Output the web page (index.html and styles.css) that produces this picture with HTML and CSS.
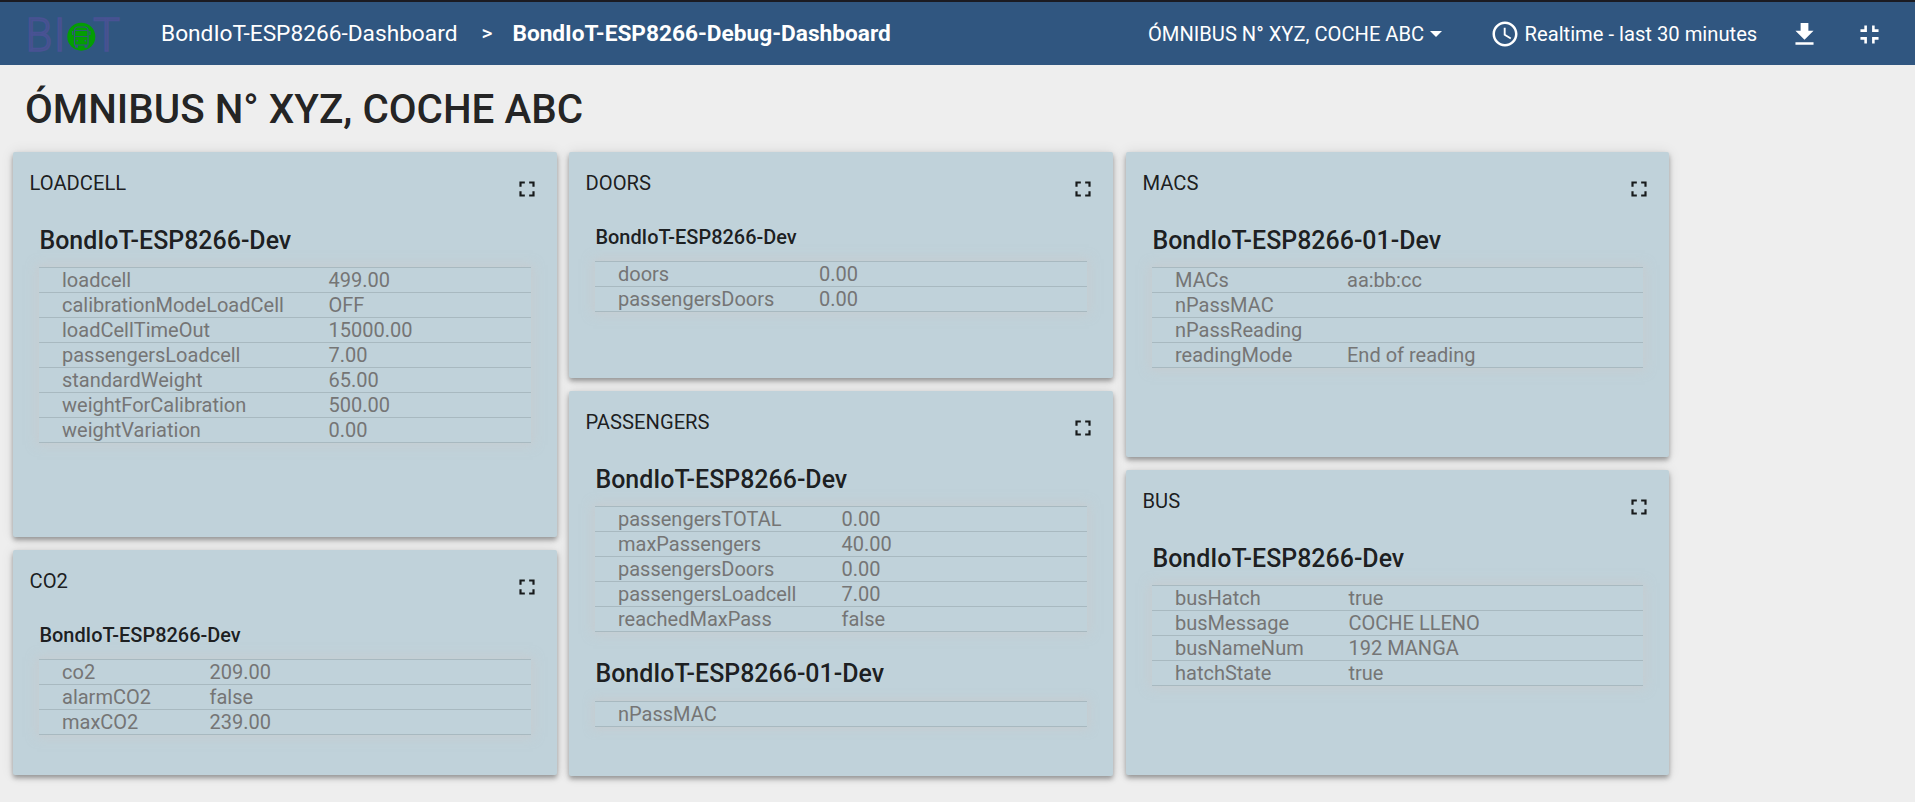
FILE: index.html
```html
<!DOCTYPE html>
<html lang="es">
<head>
<meta charset="utf-8">
<title>BondIoT-ESP8266-Debug-Dashboard</title>
<link rel="stylesheet" href="styles.css">
</head>
<body>
<svg class="defs" width="0" height="0">
  <symbol id="fullscreen" viewBox="0 0 24 24"><path d="M7 14H5v5h5v-2H7v-3zm-2-4h2V7h3V5H5v5zm12 7h-3v2h5v-5h-2v3zM14 5v2h3v3h2V5h-5z"/></symbol>
</svg>
<header class="toolbar">
  <svg class="logo" width="100" height="56" viewBox="0 -5 100 56">
    <g class="logo-letters">
      <text x="1.5" y="39.5" textLength="27" lengthAdjust="spacingAndGlyphs">B</text>
      <text x="29.5" y="39.5">I</text>
      <text x="69" y="39.5" textLength="27" lengthAdjust="spacingAndGlyphs">T</text>
    </g>
    <circle cx="57.3" cy="25.700" r="14" fill="#039d03"/>
    <path d="M50.500 34V19q.3-2.500 3-3h7.500q2.700.5 3 3v15z" fill="none" stroke="#30567f" stroke-width="1.2"/>
    <path d="M50.500 19.500h13.500M50.500 25.500h13.500" stroke="#30567f" stroke-width=".9"/>
    <path d="M48 20h1.200v4h-1.200zM65.300 20h1.200v4h-1.200zM51 34h3v2.800h-3zM60.500 34h3v2.800h-3z" fill="#30567f"/>
    <circle cx="53.300" cy="29.700" r=".9" fill="#30567f"/><circle cx="61.300" cy="29.700" r=".9" fill="#30567f"/>
  </svg>
  <nav class="crumbs">
    <span class="crumb">BondIoT-ESP8266-Dashboard</span>
    <span class="sep">&gt;</span>
    <span class="crumb current">BondIoT-ESP8266-Debug-Dashboard</span>
  </nav>
  <div class="entity"><span>ÓMNIBUS N° XYZ, COCHE ABC</span><i class="caret"></i></div>
  <div class="time">
    <svg width="30" height="30" viewBox="0 0 24 24" fill="#fff"><path d="M11.990 2C6.470 2 2 6.480 2 12s4.470 10 9.990 10C17.520 22 22 17.520 22 12S17.520 2 11.990 2zM12 20c-4.420 0-8-3.580-8-8s3.580-8 8-8 8 3.580 8 8-3.580 8-8 8zm.5-13H11v6l5.250 3.150.75-1.230-4.500-2.670z"/></svg>
    <span>Realtime - last 30 minutes</span>
  </div>
  <svg class="download" width="31" height="31" viewBox="0 0 24 24" fill="#fff"><path d="M19 9h-4V3H9v6H5l7 7 7-7zM5 18v2h14v-2H5z"/></svg>
  <svg class="exit" width="31" height="31" viewBox="0 0 24 24" fill="#fff"><path d="M5 16h3v3h2v-5H5v2zm3-8H5v2h5V5H8v3zm6 11h2v-3h3v-2h-5v5zm2-11V5h-2v5h5V8h-3z"/></svg>
</header>
<h1 class="title">ÓMNIBUS N° XYZ, COCHE ABC</h1>
<main class="board">
  <div class="column">
    <section class="card loadcell">
      <div class="head"><span>LOADCELL</span><svg class="full"><use href="#fullscreen"/></svg></div>
      <h2 class="device">BondIoT-ESP8266-Dev</h2>
      <dl class="rows">
        <div class="row"><dt>loadcell</dt><dd>499.00</dd></div>
        <div class="row"><dt>calibrationModeLoadCell</dt><dd>OFF</dd></div>
        <div class="row"><dt>loadCellTimeOut</dt><dd>15000.00</dd></div>
        <div class="row"><dt>passengersLoadcell</dt><dd>7.00</dd></div>
        <div class="row"><dt>standardWeight</dt><dd>65.00</dd></div>
        <div class="row"><dt>weightForCalibration</dt><dd>500.00</dd></div>
        <div class="row"><dt>weightVariation</dt><dd>0.00</dd></div>
      </dl>
    </section>
    <section class="card co2">
      <div class="head"><span>CO2</span><svg class="full"><use href="#fullscreen"/></svg></div>
      <h2 class="device small">BondIoT-ESP8266-Dev</h2>
      <dl class="rows">
        <div class="row"><dt>co2</dt><dd>209.00</dd></div>
        <div class="row"><dt>alarmCO2</dt><dd>false</dd></div>
        <div class="row"><dt>maxCO2</dt><dd>239.00</dd></div>
      </dl>
    </section>
  </div>
  <div class="column middle">
    <section class="card doors">
      <div class="head"><span>DOORS</span><svg class="full"><use href="#fullscreen"/></svg></div>
      <h2 class="device small">BondIoT-ESP8266-Dev</h2>
      <dl class="rows">
        <div class="row"><dt>doors</dt><dd>0.00</dd></div>
        <div class="row"><dt>passengersDoors</dt><dd>0.00</dd></div>
      </dl>
    </section>
    <section class="card passengers">
      <div class="head"><span>PASSENGERS</span><svg class="full"><use href="#fullscreen"/></svg></div>
      <h2 class="device">BondIoT-ESP8266-Dev</h2>
      <dl class="rows">
        <div class="row"><dt>passengersTOTAL</dt><dd>0.00</dd></div>
        <div class="row"><dt>maxPassengers</dt><dd>40.00</dd></div>
        <div class="row"><dt>passengersDoors</dt><dd>0.00</dd></div>
        <div class="row"><dt>passengersLoadcell</dt><dd>7.00</dd></div>
        <div class="row"><dt>reachedMaxPass</dt><dd>false</dd></div>
      </dl>
      <h2 class="device second">BondIoT-ESP8266-01-Dev</h2>
      <dl class="rows">
        <div class="row"><dt>nPassMAC</dt><dd></dd></div>
      </dl>
    </section>
  </div>
  <div class="column">
    <section class="card macs">
      <div class="head"><span>MACS</span><svg class="full"><use href="#fullscreen"/></svg></div>
      <h2 class="device">BondIoT-ESP8266-01-Dev</h2>
      <dl class="rows">
        <div class="row"><dt>MACs</dt><dd>aa:bb:cc</dd></div>
        <div class="row"><dt>nPassMAC</dt><dd></dd></div>
        <div class="row"><dt>nPassReading</dt><dd></dd></div>
        <div class="row"><dt>readingMode</dt><dd>End of reading</dd></div>
      </dl>
    </section>
    <section class="card bus">
      <div class="head"><span>BUS</span><svg class="full"><use href="#fullscreen"/></svg></div>
      <h2 class="device">BondIoT-ESP8266-Dev</h2>
      <dl class="rows">
        <div class="row"><dt>busHatch</dt><dd>true</dd></div>
        <div class="row"><dt>busMessage</dt><dd>COCHE LLENO</dd></div>
        <div class="row"><dt>busNameNum</dt><dd>192 MANGA</dd></div>
        <div class="row"><dt>hatchState</dt><dd>true</dd></div>
      </dl>
    </section>
  </div>
</main>
</body>
</html>
```
FILE: styles.css
```css
* { box-sizing: border-box; }
body {
  margin: 0;
  height: 802px;
  overflow: hidden;
  background: #eee;
  color: rgba(0, 0, 0, .87);
  font-family: Roboto, sans-serif;
}
.defs { position: absolute; }
.toolbar {
  display: flex;
  align-items: center;
  height: 65px;
  padding: 0 30px 0 24px;
  border-top: 2px solid #1b1b22;
  background: #305680;
  color: #fff;
  white-space: nowrap;
}
.logo { flex: none; overflow: visible; }
.logo-letters {
  font: 300 46px Roboto, sans-serif;
  fill: #43548b;
  stroke: #495294;
  stroke-width: 1.5px;
}
.crumbs {
  display: flex;
  align-items: center;
  flex: none;
  width: 987px;
  margin-left: 37px;
  font-size: 22.700px;
  line-height: 28px;
}
.crumb { flex: none; }
.sep { width: 55px; padding: 0 0 1px 24px; font-weight: 500; font-size: 21px; }
.current { font-size: 22.670px; font-weight: 700; }
.entity { display: flex; align-items: center; flex: none; width: 341.500px; font-size: 20.150px; line-height: 24px; }
.caret { margin-left: 6px; border: 6px solid transparent; border-top-color: #fff; border-bottom: 0; }
.time { display: flex; align-items: center; flex: none; gap: 5px; width: 299.500px; font-size: 20.200px; }
.exit { margin: 2px 0 0 33.500px; }
.download { margin-top: 2px; }
.download, .exit, .time svg { flex: none; }
.title { margin: 0; padding: 21px 0 0 25px; height: 87px; font-size: 40.400px; line-height: 48px; font-weight: 500; }
.board { display: grid; grid-template-columns: 544px 545px 543px; column-gap: 12px; padding-left: 13px; }
.column { display: flex; flex-direction: column; gap: 13px; }
.middle { padding-right: 1px; }
.card {
  padding: 17px 26px 0;
  border-radius: 2px;
  background: #c0d2da;
  box-shadow: 0 3px 5px rgba(0, 0, 0, .35), 0 0 14px rgba(0, 0, 0, .09);
}
.loadcell { height: 385px; --key: 266.500px; }
.co2 { height: 225px; --key: 147.500px; }
.doors { height: 226px; --key: 201px; }
.passengers { height: 385px; --key: 223.500px; }
.macs { height: 305px; --key: 172px; }
.bus { height: 305px; --key: 173.500px; }
.head { display: flex; justify-content: space-between; height: 50px; margin: 0 -9px 0 -9.500px; font-size: 20.200px; line-height: 28px; }
.full { width: 26px; height: 26px; margin: 7.400px 0 0; fill: #171a1b; }
.device { height: 48px; margin: 0; padding: 6px 0 0 .4px; font-size: 24.950px; line-height: 32px; font-weight: 500; }
.device.small { height: 42px; padding-top: 2px; font-size: 19.950px; }
.device.second { height: 69px; padding-top: 26px; }
.rows {
  margin: 0;
  border-top: 1px solid #a8b9c0;
  box-shadow: 0 0 10px 2px rgba(205, 200, 200, .5);
  background: #c0d2da;
  color: #757575;
  font-size: 20px;
  line-height: 24px;
}
.row { display: grid; grid-template-columns: var(--key) 1fr; height: 25px; padding-left: 23px; border-bottom: 1px solid #a8b9c0; }
.row dd { margin: 0; }
.row dt { white-space: nowrap; }
```
